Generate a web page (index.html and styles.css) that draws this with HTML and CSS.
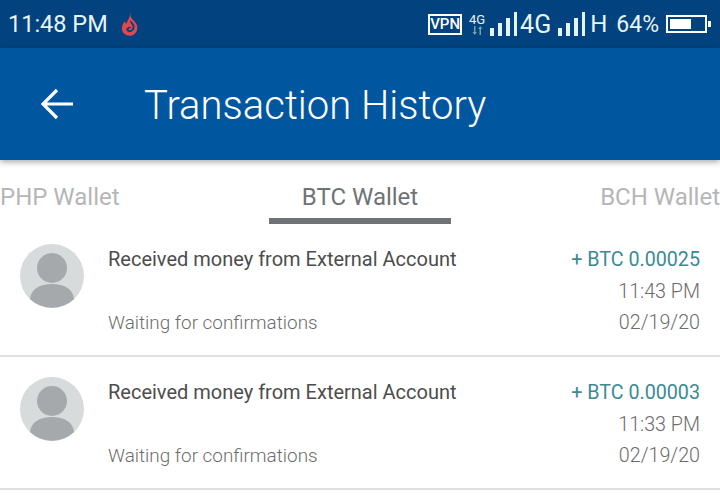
FILE: index.html
```html
<!DOCTYPE html>
<html lang="en">
<head>
    <meta charset="UTF-8">
    <meta name="viewport" content="width=device-width, initial-scale=1.0">
    <title>Transaction History</title>
    <link rel="stylesheet" href="styles.css">
</head>
<body>
    <div class="status-bar">
        <span class="clock">11:48 PM</span>
        <svg class="flame" width="18" height="26" viewBox="0 0 20 26">
            <path fill="#e2474f" d="M10 0c1 3 0 5 3 8 3 3 6 6 5 11-1 4-4 7-8 7-5 0-9-3-9-8 0-4 2-6 3-8 1 1 1 2 2 3 1-4 5-8 4-13z"/>
            <path fill="#02427f" d="M10 9c2 1 4 3 5 6 .5 3-1 6-4 7-2 .4-5-.6-5-3 0-2 2-3 4-3 1 0 1.500 1 1 2-.6-.6-2-.6-2.500.2-.4 1 1 1.800 2.500 1.400 2-.6 2.500-3 1.500-5-.8-2-2.500-3-2.500-5.600z"/>
        </svg>
        <div class="status-right">
            <span class="vpn">VPN</span>
            <div class="net-small">
                <span>4G</span>
                <svg width="11" height="9" viewBox="0 0 11 9">
                    <path fill="#6fa3a8" d="M2 0h1.500v6H5L2.700 9 .5 6H2zM7.500 9H9V3h1.500L8.300 0 6 3h1.500z"/>
                </svg>
            </div>
            <svg class="signal" width="28" height="24" viewBox="0 0 28 24">
                <rect x="0" y="16" width="4" height="8"/>
                <rect x="8" y="11" width="4" height="13"/>
                <rect x="16" y="6" width="4" height="18"/>
                <rect x="24" y="0" width="3" height="24"/>
            </svg>
            <span class="net-label first">4G</span>
            <svg class="signal second" width="28" height="24" viewBox="0 0 28 24">
                <rect x="0" y="16" width="4" height="8"/>
                <rect x="8" y="11" width="4" height="13"/>
                <rect x="16" y="6" width="4" height="18"/>
                <rect x="24" y="0" width="3" height="24"/>
            </svg>
            <span class="net-label last">H</span>
            <span class="percent">64%</span>
            <div class="battery"><div class="battery-level" style="width: 64%"></div></div>
            <div class="battery-tip"></div>
        </div>
    </div>

    <header class="toolbar">
        <svg class="back" width="34" height="32" viewBox="0 0 34 32">
            <path fill="none" stroke="#fff" stroke-width="3.200" d="M33 16H3M17 2 3 16l14 14"/>
        </svg>
        <h1>Transaction History</h1>
    </header>

    <nav class="tabs">
        <span class="tab">PHP Wallet</span>
        <span class="tab active">BTC Wallet</span>
        <span class="tab">BCH Wallet</span>
    </nav>

    <div class="row">
        <svg class="avatar" width="64" height="64" viewBox="0 0 64 64">
            <circle cx="32" cy="32" r="32" fill="#d8dbdc"/>
            <circle cx="32" cy="24" r="15" fill="#a5a9ab"/>
            <path fill="#a5a9ab" d="M10 55c1-10 10-15 22-15s21 5 22 15a32 32 0 0 1-44 0z"/>
        </svg>
        <div class="row-text">
            <div class="row-title">Received money from External Account</div>
            <div class="row-status">Waiting for confirmations</div>
        </div>
        <div class="row-meta">
            <div class="amount">+ BTC 0.00025</div>
            <div class="time">11:43 PM</div>
            <div class="date">02/19/20</div>
        </div>
    </div>

    <div class="row">
        <svg class="avatar" width="64" height="64" viewBox="0 0 64 64">
            <circle cx="32" cy="32" r="32" fill="#d8dbdc"/>
            <circle cx="32" cy="24" r="15" fill="#a5a9ab"/>
            <path fill="#a5a9ab" d="M10 55c1-10 10-15 22-15s21 5 22 15a32 32 0 0 1-44 0z"/>
        </svg>
        <div class="row-text">
            <div class="row-title">Received money from External Account</div>
            <div class="row-status">Waiting for confirmations</div>
        </div>
        <div class="row-meta">
            <div class="amount">+ BTC 0.00003</div>
            <div class="time">11:33 PM</div>
            <div class="date">02/19/20</div>
        </div>
    </div>
</body>
</html>
```

FILE: styles.css
```css
html, body {
    height: 100%;
    overflow: hidden;
}
body {
    margin: 0;
    background-color: #fff;
    font-family: Roboto, sans-serif;
}

.status-bar {
    height: 48px;
    display: flex;
    align-items: center;
    padding: 0 9px 0 8px;
    background-color: #02427f;
    color: #e6f4f6;
}
.clock {
    font-size: 23.500px;
}
.flame {
    margin-left: 13px;
}
.status-right {
    margin-left: auto;
    display: flex;
    align-items: center;
}
.vpn {
    width: 34px;
    height: 21px;
    box-sizing: border-box;
    border: 2px solid #fff;
    line-height: 17px;
    text-align: center;
    font-size: 15px;
    font-weight: 500;
    color: #fff;
}
.net-small {
    margin-left: 6px;
    width: 18px;
    display: flex;
    flex-direction: column;
    align-items: center;
    font-size: 13px;
    line-height: 13px;
}
.signal {
    margin-left: 4px;
    fill: #e6f4f6;
}
.signal.second {
    margin-left: 7px;
}
.net-label {
    font-size: 25px;
    margin-left: 2px;
}
.net-label.last {
    font-size: 24px;
    margin-left: 4px;
}
.percent {
    font-size: 23px;
    margin-left: 9px;
}
.battery {
    margin-left: 7px;
    width: 41px;
    height: 18px;
    padding: 2px;
    box-sizing: border-box;
    border: 2px solid #fff;
}
.battery-level {
    height: 100%;
    background-color: #fff;
}
.battery-tip {
    width: 3px;
    height: 6px;
    margin-left: 1px;
    background-color: #fff;
}

.toolbar {
    height: 112px;
    display: flex;
    align-items: center;
    padding-left: 40px;
    background-color: #01579f;
    box-shadow: 0 2px 6px rgba(0, 0, 0, 0.35);
    color: #fff;
}
.back {
    margin-right: 70px;
}
.toolbar h1 {
    margin: 2px 0 0;
    font-size: 40px;
    font-weight: 300;
}

.tabs {
    height: 64px;
    display: grid;
    grid-template-columns: 1fr 182px 1fr;
    font-size: 24px;
    color: #b4b6b8;
}
.tab {
    padding-top: 23px;
    box-sizing: border-box;
}
.tab:last-child {
    text-align: right;
}
.tab.active {
    text-align: center;
    color: #6f7375;
    border-bottom: 6px solid #6f7375;
}

.row {
    display: flex;
    padding: 20px 20px 0;
    box-sizing: border-box;
    height: 133px;
    border-bottom: 2px solid #dfdfdf;
}
.avatar {
    flex: none;
}
.row-text {
    margin-left: 24px;
    flex: 1;
}
.row-title {
    font-size: 20px;
    line-height: 30px;
    color: #4d4d4d;
}
.row-status {
    margin-top: 34px;
    font-size: 18.900px;
    line-height: 30px;
    font-weight: 300;
    color: #6c6c6c;
}
.row-meta {
    padding-top: 1px;
    text-align: right;
    font-size: 19.700px;
    line-height: 32px;
    font-weight: 300;
    color: #6c6c6c;
}
.amount {
    line-height: 30px;
    font-weight: 400;
    color: #3b8a94;
}
.time {
    margin-top: 1px;
}
.date {
    margin-top: -1px;
}
```
